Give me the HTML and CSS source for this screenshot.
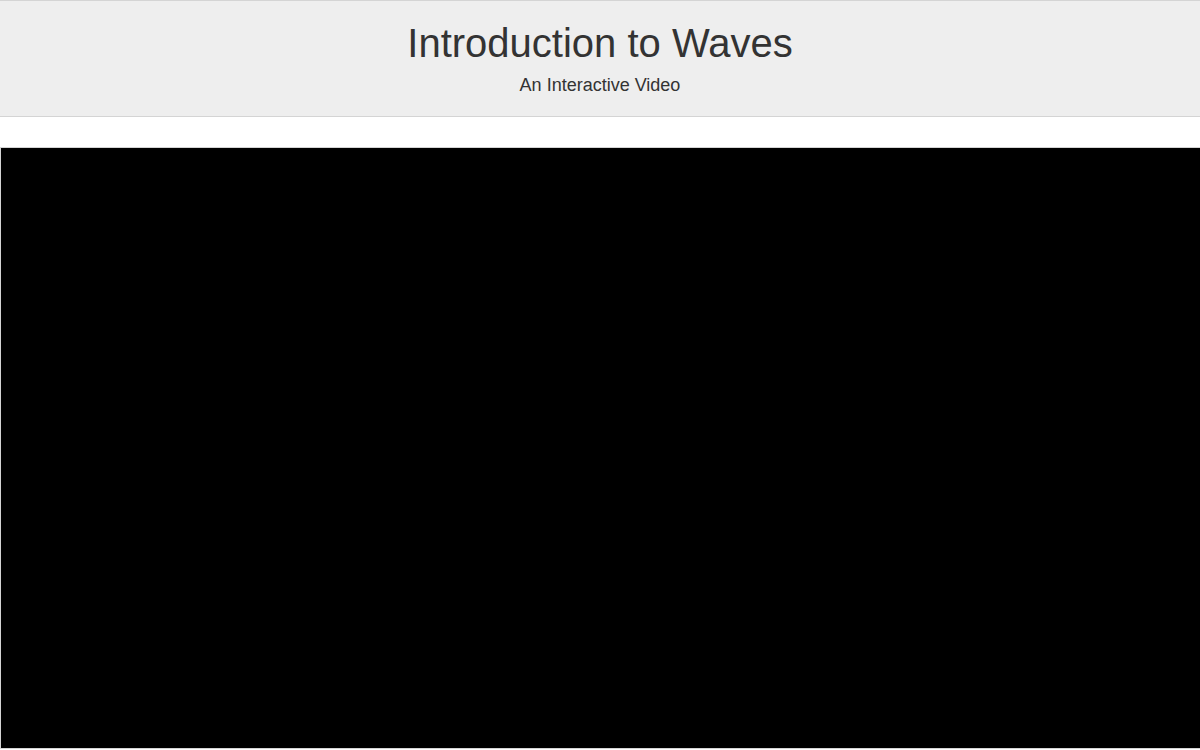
FILE: index.html
```html
<!DOCTYPE html>
<html lang="en">
<head>
<meta charset="utf-8">
<title>Introduction to Waves</title>
<link rel="stylesheet" href="styles.css">
</head>
<body>
<header class="page-header">
  <h1 class="title">Introduction to Waves</h1>
  <p class="subtitle">An Interactive Video</p>
</header>
<main class="content">
  <div class="video-frame"></div>
</main>
</body>
</html>
```
FILE: styles.css
```css
html, body {
  margin: 0;
  padding: 0;
  overflow: hidden;
  background: #fff;
}
body {
  font-family: "Liberation Sans", Arial, Helvetica, sans-serif;
  color: #333;
}
.page-header {
  background: #eee;
  border-top: 1px solid #d4d4d4;
  border-bottom: 1px solid #d4d4d4;
  height: 115px;
  box-sizing: content-box;
  text-align: center;
  padding: 0;
}
.title {
  margin: 0;
  padding-top: 19px;
  font-size: 40px;
  font-weight: normal;
  line-height: 46px;
}
.subtitle {
  margin: 0;
  padding-top: 6px;
  font-size: 18px;
  line-height: 26px;
}
.content {
  padding-top: 30px;
}
.video-frame {
  width: 100%;
  height: 600px;
  background: #000;
  border: 1px solid #d4d4d4;
}
```
